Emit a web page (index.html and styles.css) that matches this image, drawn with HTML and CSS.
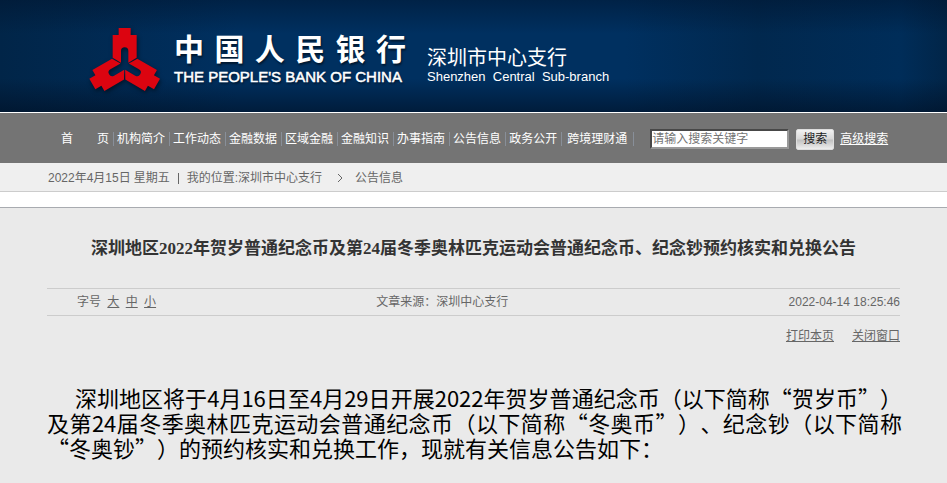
FILE: index.html
```
<!DOCTYPE html>
<html lang="zh-CN">
<head>
  <meta charset="UTF-8">
  <meta name="viewport" content="width=device-width, initial-scale=1">
  <title>公告信息 - 中国人民银行深圳市中心支行</title>
  <link rel="stylesheet" href="styles.css">
</head>
<body>
  <header class="header">
    <svg class="emblem" viewBox="52 48 222 192" aria-hidden="true">
      <defs>
        <path id="arm" d="M144 51H180V72H198V140L173 155V120A11 11 0 0 0 151 120V155L126 140V72H144Z"/>
      </defs>
      <g fill="#dc0410">
        <use href="#arm"/>
        <use href="#arm" transform="rotate(120 162 163)"/>
        <use href="#arm" transform="rotate(240 162 163)"/>
      </g>
    </svg>
    <div class="bank">
      <div class="bank-cn"><span>中</span><span>国</span><span>人</span><span>民</span><span>银</span><span>行</span></div>
      <div class="bank-en">THE PEOPLE'S BANK OF CHINA</div>
    </div>
    <div class="branch">
      <div class="branch-cn">深圳市中心支行</div>
      <div class="branch-en">Shenzhen&nbsp; Central&nbsp; Sub-branch</div>
    </div>
  </header>

  <nav class="nav">
    <ul class="menu">
      <li><a href="#">首　　页</a></li>
      <li><a href="#">机构简介</a></li>
      <li><a href="#">工作动态</a></li>
      <li><a href="#">金融数据</a></li>
      <li><a href="#">区域金融</a></li>
      <li><a href="#">金融知识</a></li>
      <li><a href="#">办事指南</a></li>
      <li><a href="#">公告信息</a></li>
      <li><a href="#">政务公开</a></li>
      <li><a href="#">跨境理财通</a></li>
    </ul>
    <form class="search">
      <input type="text" class="search-text" aria-label="搜索关键字" placeholder="请输入搜索关键字">
      <button type="button" class="search-btn">搜索</button>
      <a href="#" class="search-more">高级搜索</a>
    </form>
  </nav>

  <div class="crumbs">
    <span>2022年4月15日</span>
    <span>星期五</span>
    <i class="bar"></i>
    <span>我的位置:<a href="#">深圳市中心支行</a></span>
    <svg class="arrow" viewBox="0 0 6 8" aria-hidden="true"><path d="M1 0L5 4L1 8" fill="none" stroke="#666"/></svg>
    <a href="#">公告信息</a>
  </div>

  <main class="content">
    <h1 class="title">深圳地区2022年贺岁普通纪念币及第24届冬季奥林匹克运动会普通纪念币、纪念钞预约核实和兑换公告</h1>
    <div class="info">
      <div class="font-size">字号 <a href="#">大</a> <a href="#">中</a> <a href="#">小</a></div>
      <div class="source">文章来源：深圳中心支行</div>
      <div class="time">2022-04-14 18:25:46</div>
    </div>
    <div class="tools">
      <a href="#">打印本页</a>
      <a href="#">关闭窗口</a>
    </div>
    <p class="text">深圳地区将于4月16日至4月29日开展2022年贺岁普通纪念币（以下简称“贺岁币”）及第24届冬季奥林匹克运动会普通纪念币（以下简称“冬奥币”）、纪念钞（以下简称“冬奥钞”）的预约核实和兑换工作，现就有关信息公告如下：</p>
  </main>
</body>
</html>
```

FILE: styles.css
```
body {
  margin: 0;
  font: 12px/20px "Liberation Sans", "Noto Sans CJK SC", sans-serif;
  color: #666;
  background-color: #eaeaea;
}
a {
  color: inherit;
}
.header {
  display: flex;
  box-sizing: border-box;
  height: 113px;
  padding: 27px 0 0 88px;
  border-bottom: 1px solid #fff;
  color: #fff;
  background:
    linear-gradient(rgba(0,20,45,0.5), transparent 30%, transparent 70%, rgba(0,15,35,0.6)),
    linear-gradient(90deg, #012548, #003060 25%, #003060 66%, #01284e 80%, #002d59 95%, #012548);
}
.emblem {
  width: 74px;
  height: 64px;
  filter: drop-shadow(1px 2px 2px rgba(0,0,0,0.5));
}
.bank {
  width: 232px;
  margin-left: 12px;
  padding-top: 6px;
  text-shadow: 1px 2px 2px rgba(0,0,0,0.5);
}
.bank-cn {
  display: flex;
  justify-content: space-between;
  font-size: 30px;
  line-height: 34px;
  font-weight: bold;
}
.bank-en {
  font-size: 15px;
  line-height: 20px;
  white-space: nowrap;
  -webkit-text-stroke: 0.5px #fff;
}
.branch {
  margin-left: 21px;
  padding-top: 20px;
}
.branch-cn {
  font-size: 20px;
  line-height: 22px;
}
.branch-en {
  font-size: 13px;
  line-height: 16px;
}
.nav {
  display: flex;
  align-items: center;
  box-sizing: border-box;
  height: 50px;
  padding: 2px 0 0 58px;
  color: #fff;
  background-color: #747474;
  white-space: nowrap;
}
.menu {
  display: flex;
  margin: 0;
  padding: 0;
  list-style: none;
}
.menu li {
  padding: 0 4px 0 3px;
  border-right: 1px solid #888f99;
  line-height: 14px;
}
.menu li:last-child {
  padding: 0 6px 0 5px;
}
.menu a {
  text-decoration: none;
}
.search {
  display: flex;
  align-items: center;
  margin-left: 16px;
}
.search-text {
  box-sizing: border-box;
  width: 139px;
  height: 20px;
  padding: 0;
  border: 2px solid;
  border-color: #484848 #999 #999 #484848;
  font: inherit;
  background-color: #fff;
}
.search-text::placeholder {
  color: #757575;
}
.search-btn {
  width: 38px;
  height: 21px;
  margin: 0 6px 0 7px;
  padding: 0;
  border: 1px solid #ddd;
  border-radius: 2px;
  font: inherit;
  line-height: 18px;
  color: #222;
  background: linear-gradient(#f2f2f2, #d8d8d8 48%, #c0c0c0 52%, #eee);
}
.crumbs {
  display: flex;
  align-items: center;
  box-sizing: border-box;
  height: 29px;
  padding: 2px 0 0 48px;
  border-bottom: 1px solid #ccc;
  background-color: #efefef;
}
.crumbs span + span {
  margin-left: 3px;
}
.crumbs a {
  text-decoration: none;
}
.bar {
  height: 11px;
  margin: 0 8px;
  border-left: 1px solid #666;
}
.arrow {
  width: 6px;
  height: 8px;
  margin: 0 12px 0 15px;
}
.content {
  padding: 31px 47px 20px;
  border-top: 1px solid #a8abb0;
  box-shadow: 0 -15px #fff;
  margin-top: 15px;
}
.title {
  margin: 0 0 29px;
  font: bold 17px/20px "Liberation Serif", "Noto Sans CJK SC", serif;
  color: #333;
  text-align: center;
}
.info {
  display: grid;
  grid-template-columns: 4fr 4fr 3fr;
  padding-left: 30px;
  border-top: 1px solid #ccc;
  border-bottom: 1px solid #ccc;
  line-height: 26px;
}
.font-size a {
  margin-left: 3px;
}
.time {
  text-align: right;
}
.tools {
  display: flex;
  justify-content: flex-end;
  gap: 18px;
  margin-top: 10px;
}
.text {
  margin: 39px -2px 0 0;
  font: 22px/25px "Noto Sans CJK SC", sans-serif;
  color: #000;
  text-align: justify;
  text-indent: 28px;
  text-spacing-trim: space-all;
}
```
